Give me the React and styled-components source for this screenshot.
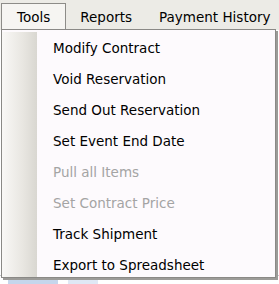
import React from 'react'
import styled, {createGlobalStyle} from 'styled-components'

const Global = createGlobalStyle`
  html, body {
    margin: 0;
    padding: 0;
    background: #ffffff;
  }
  body {
    font-family: "DejaVu Sans", Verdana, sans-serif;
    font-size: 13.5px;
    color: #000;
    overflow: hidden;
  }
`

const Page = styled.div`
  position: relative;
  width: 279px;
  height: 284px;
  overflow: hidden;
`

const MenuBar = styled.div`
  display: flex;
  align-items: flex-end;
  height: 30px;
  padding-left: 1px;
  background: #ecebe6;
`

const Tab = styled.div`
  box-sizing: border-box;
  height: 27px;
  display: flex;
  align-items: center;
  padding: 0 ${({$pad}) => $pad}px;
  border: 1px solid ${({$open}) => ($open ? '#8d8c88' : 'transparent')};
  border-bottom: none;
  background: ${({$open}) => ($open ? '#f6f5f2' : 'transparent')};
  white-space: nowrap;
`

const Content = styled.div`
  display: flex;
  flex-direction: column;
  height: 254px;
  justify-content: flex-end;
`

const BackRow = styled.div`
  display: flex;
  align-items: center;
  gap: 10px;
  height: 8px;
  padding-left: 8px;
  border-top: 1px solid #c8c8c8;
`

const BackCell = styled.div`
  width: ${({$w}) => $w}px;
  height: 8px;
  background: ${({$bg}) => $bg};
`

const Dropdown = styled.div`
  position: absolute;
  top: 29px;
  left: 1px;
  width: 273px;
  height: 247px;
  display: flex;
  border: 1px solid #8a8986;
  background: #fdfafd;
  box-shadow: 2px 2px 0 #9c9b98;
`

const Strip = styled.div`
  width: 35px;
  margin-top: 2px;
  background: linear-gradient(to right, #f9f8f6, #e8e6e1 60%, #d9d7d1);
`

const Items = styled.ul`
  list-style: none;
  margin: 0;
  padding: 3px 0 0;
  flex: 1;
  overflow: hidden;
`

const Item = styled.li`
  height: 31px;
  line-height: 31px;
  padding-left: 16px;
  color: ${({$disabled}) => ($disabled ? '#a4a4a4' : '#000')};
  white-space: nowrap;
`

const items = [
  {label: 'Modify Contract'},
  {label: 'Void Reservation'},
  {label: 'Send Out Reservation'},
  {label: 'Set Event End Date'},
  {label: 'Pull all Items', disabled: true},
  {label: 'Set Contract Price', disabled: true},
  {label: 'Track Shipment'},
  {label: 'Export to Spreadsheet'},
]

export default function App() {
  return (
    <Page>
      <Global />
      <MenuBar>
        <Tab $open $pad={15}>Tools</Tab>
        <Tab $pad={13}>Reports</Tab>
        <Tab $pad={12}>Payment History</Tab>
      </MenuBar>
      <Content>
        <BackRow>
          <BackCell $w={50} $bg="#c5d6ec" />
          <BackCell $w={30} $bg="#dfe8f5" />
        </BackRow>
      </Content>
      <Dropdown>
        <Strip />
        <Items>
          {items.map(it => (
            <Item key={it.label} $disabled={it.disabled}>
              {it.label}
            </Item>
          ))}
        </Items>
      </Dropdown>
    </Page>
  )
}
